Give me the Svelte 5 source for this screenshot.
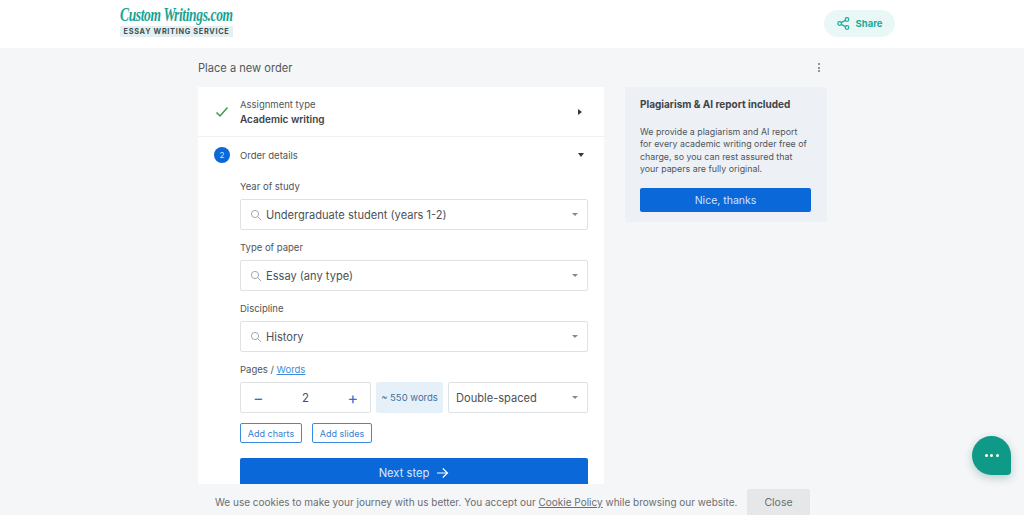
<script>
  const fields = [
    { label: 'Year of study', value: 'Undergraduate student (years 1-2)' },
    { label: 'Type of paper', value: 'Essay (any type)' },
    { label: 'Discipline', value: 'History' }
  ];
</script>

<div class="page">
  <header class="top">
    <a class="logo" href="#home">
      <span class="logo-name">Custom Writings.com</span>
      <span class="logo-tag">ESSAY WRITING SERVICE</span>
    </a>
    <button class="share">
      <svg width="13" height="13" viewBox="0 0 13 13" fill="none" stroke="#1fa79a" stroke-width="1.2">
        <circle cx="10" cy="2.5" r="1.8" />
        <circle cx="2.6" cy="6.5" r="1.8" />
        <circle cx="10" cy="10.5" r="1.8" />
        <path d="M4.2 5.6 8.4 3.4M4.2 7.4l4.2 2.2" />
      </svg>
      Share
    </button>
  </header>

  <main class="main">
    <div class="title-row">
      <h1>Place a new order</h1>
      <span class="more"><i></i><i></i><i></i></span>
    </div>

    <div class="columns">
      <section class="card">
        <div class="step done">
          <svg class="check" width="14" height="12" viewBox="0 0 14 12" fill="none" stroke="#3a9a4e" stroke-width="1.5">
            <path d="M1.5 6.5 5 10l7.5-8.5" />
          </svg>
          <div class="step-text">
            <div>Assignment type</div>
            <strong>Academic writing</strong>
          </div>
          <span class="caret-right"></span>
        </div>

        <div class="step-head">
          <span class="num">2</span>
          <span class="step-name">Order details</span>
          <span class="caret-down"></span>
        </div>

        <div class="form">
          {#each fields as field}
            <div class="label">{field.label}</div>
            <div class="select">
              <svg width="12" height="12" viewBox="0 0 12 12" fill="none" stroke="#a4a9ae" stroke-width="1">
                <circle cx="5" cy="5" r="3.6" />
                <path d="m7.7 7.7 3.4 3.4" />
              </svg>
              <span class="value">{field.value}</span>
              <span class="arrow"></span>
            </div>
          {/each}

          <div class="label">Pages / <a href="#words">Words</a></div>
          <div class="pages">
            <div class="stepper">
              <span class="sign">−</span>
              <span class="count">2</span>
              <span class="sign">+</span>
            </div>
            <div class="words">~ 550 words</div>
            <div class="select spacing">
              <span class="value">Double-spaced</span>
              <span class="arrow"></span>
            </div>
          </div>

          <div class="extras">
            <button class="extra">Add charts</button>
            <button class="extra">Add slides</button>
          </div>

          <button class="next">
            Next step
            <svg width="13" height="12" viewBox="0 0 13 12" fill="none" stroke="#fff" stroke-width="1.2">
              <path d="M1 6h10.500M6.800 1.500 11.500 6l-4.700 4.500" />
            </svg>
          </button>
        </div>
      </section>

      <aside class="note">
        <h2>Plagiarism &amp; AI report included</h2>
        <p>We provide a plagiarism and AI report for every academic writing order free of charge, so you can rest assured that your papers are fully original.</p>
        <button>Nice, thanks</button>
      </aside>
    </div>
  </main>

  <div class="cookies">
    <span>We use cookies to make your journey with us better. You accept our <a href="#policy">Cookie Policy</a> while browsing our website.</span>
    <button>Close</button>
  </div>

  <div class="chat"><i></i><i></i><i></i></div>
</div>

<style>
  :global(body) {
    margin: 0;
    background: #f4f6f8;
  }
  .page {
    height: 515px;
    overflow: hidden;
    position: relative;
    font-family: Inter, "Liberation Sans", sans-serif;
    color: #50555a;
  }
  button {
    font-family: inherit;
    border: none;
    padding: 0;
  }
  .top {
    height: 48px;
    background: #fff;
    display: flex;
    align-items: flex-start;
    justify-content: space-between;
    padding: 0 129px 0 120px;
  }
  .logo {
    display: flex;
    flex-direction: column;
    align-items: flex-start;
    text-decoration: none;
    width: 113px;
    padding-top: 4px;
  }
  .logo-name {
    font-family: "Liberation Serif", serif;
    font-style: italic;
    font-weight: 700;
    font-size: 19px;
    line-height: 21px;
    letter-spacing: -0.5px;
    color: #17a294;
    white-space: nowrap;
    transform: scaleX(0.71);
    transform-origin: left center;
  }
  .logo-tag {
    margin-top: 1px;
    width: 113px;
    height: 11px;
    background: #e3eff0;
    color: #3d4f55;
    font-size: 7.300px;
    font-weight: 700;
    line-height: 11px;
    letter-spacing: 0.7px;
    text-align: center;
    white-space: nowrap;
  }
  .share {
    margin-top: 10px;
    width: 71px;
    height: 27px;
    border-radius: 14px;
    background: #e9f8f6;
    color: #1fa79a;
    font-size: 9.500px;
    font-weight: 700;
    display: flex;
    align-items: center;
    justify-content: center;
    gap: 6px;
  }
  .main {
    width: 629px;
    margin-left: 198px;
  }
  .title-row {
    height: 39px;
    display: flex;
    align-items: center;
    justify-content: space-between;
  }
  h1 {
    margin: 0;
    font-size: 11.100px;
    font-weight: 400;
    color: #53585c;
  }
  .more {
    display: flex;
    flex-direction: column;
    gap: 1.500px;
    padding-right: 7px;
  }
  .more i {
    width: 2px;
    height: 2px;
    border-radius: 50%;
    background: #70757a;
  }
  .columns {
    display: flex;
    align-items: flex-start;
    gap: 21px;
  }
  .card {
    width: 406px;
    background: #fff;
    flex: none;
    height: 420px;
  }
  .step {
    height: 49px;
    display: flex;
    align-items: center;
    border-bottom: 1px solid #f0f1f3;
    padding: 0 22px 0 17px;
  }
  .check {
    margin-right: 11px;
    flex: none;
  }
  .step-text {
    flex: 1;
    font-size: 9.500px;
    line-height: 14px;
  }
  .step-text strong {
    display: block;
    color: #3d4246;
    font-weight: 600;
    font-size: 10px;
  }
  .caret-right {
    width: 0;
    height: 0;
    border-left: 4px solid #33383c;
    border-top: 3.500px solid transparent;
    border-bottom: 3.500px solid transparent;
  }
  .step-head {
    height: 36px;
    display: flex;
    align-items: center;
    padding: 0 20px 0 16px;
  }
  .num {
    width: 16px;
    height: 16px;
    border-radius: 50%;
    background: #0a68d8;
    color: #cfe2fa;
    font-size: 8px;
    line-height: 16px;
    text-align: center;
    margin-right: 10px;
  }
  .step-name {
    flex: 1;
    font-size: 9.500px;
  }
  .caret-down {
    width: 0;
    height: 0;
    border-top: 4px solid #33383c;
    border-left: 3.500px solid transparent;
    border-right: 3.500px solid transparent;
  }
  .form {
    padding: 0 16px 0 42px;
  }
  .label {
    font-size: 9.500px;
    line-height: 12px;
    margin: 8px 0 6px;
  }
  .label a {
    color: #3a8be0;
  }
  .select {
    height: 31px;
    box-sizing: border-box;
    background: #fff;
    border: 1px solid #dfe2e5;
    border-radius: 2px;
    display: flex;
    align-items: center;
    padding: 0 9px 0 9px;
    margin-bottom: 12px;
  }
  .value {
    flex: 1;
    font-size: 11.100px;
    color: #4c5155;
    margin-left: 4px;
    white-space: nowrap;
  }
  .arrow {
    width: 0;
    height: 0;
    border-top: 3.500px solid #85898d;
    border-left: 3.500px solid transparent;
    border-right: 3.500px solid transparent;
  }
  .pages {
    display: flex;
    gap: 5px;
  }
  .stepper {
    width: 131px;
    height: 31px;
    box-sizing: border-box;
    border: 1px solid #dfe2e5;
    border-radius: 2px;
    display: flex;
    align-items: center;
    justify-content: space-between;
    padding: 0 12px;
  }
  .sign {
    color: #1a78d8;
    font-size: 16px;
    line-height: 16px;
  }
  .count {
    font-size: 11.500px;
    color: #4c5155;
  }
  .words {
    width: 67px;
    height: 31px;
    background: #e6f0f9;
    border-radius: 2px;
    color: #41709e;
    font-size: 9.500px;
    line-height: 31px;
    text-align: center;
    white-space: nowrap;
  }
  .spacing {
    flex: 1;
    padding-left: 3px;
    margin-bottom: 0;
  }
  .extras {
    display: flex;
    gap: 10px;
    margin-top: 10px;
  }
  .extra {
    height: 20px;
    width: 62px;
    background: #fff;
    border: 1px solid #3a8be0;
    border-radius: 2px;
    color: #3a80cf;
    font-size: 9px;
    white-space: nowrap;
  }
  .extra + .extra {
    width: 60px;
  }
  .next {
    margin-top: 15px;
    width: 100%;
    height: 31px;
    padding-bottom: 2px;
    background: #0a68d8;
    border-radius: 2px;
    color: #dbe9fb;
    font-size: 11.200px;
    display: flex;
    align-items: center;
    justify-content: center;
    gap: 7px;
  }
  .note {
    width: 202px;
    height: 135px;
    box-sizing: border-box;
    background: #edf1f6;
    border-radius: 3px;
    padding: 11px 16px 0 15px;
  }
  h2 {
    margin: 0;
    font-size: 10px;
    line-height: 12px;
    font-weight: 700;
    color: #3f4448;
  }
  .note p {
    margin: 15.500px 0 0;
    font-size: 8.850px;
    line-height: 12.500px;
    color: #50555a;
  }
  .note button {
    display: block;
    margin-top: 12.500px;
    width: 171px;
    height: 24px;
    background: #0a68d8;
    border-radius: 2px;
    color: #cfe2fa;
    font-size: 10.500px;
  }
  .cookies {
    position: absolute;
    left: 0;
    right: 0;
    bottom: 0;
    height: 31px;
    box-sizing: border-box;
    background: #f5f6f7;
    display: flex;
    align-items: center;
    padding: 5px 0 0 215px;
    font-size: 10px;
    color: #6a6e72;
  }
  .cookies span {
    white-space: nowrap;
  }
  .cookies a {
    color: #6a6e72;
  }
  .cookies button {
    position: absolute;
    left: 747px;
    top: 5px;
    width: 63px;
    height: 26px;
    background: #e6e7e8;
    border-radius: 2px 2px 0 0;
    color: #6a6e72;
    font-size: 10.500px;
  }
  .chat {
    position: absolute;
    left: 972px;
    top: 436px;
    width: 39px;
    height: 39px;
    background: #0e9a86;
    border-radius: 50% 50% 4px 50%;
    box-shadow: 0 3px 8px rgba(0, 80, 70, 0.25);
    display: flex;
    align-items: center;
    justify-content: center;
    gap: 2.500px;
  }
  .chat i {
    width: 3px;
    height: 3px;
    border-radius: 50%;
    background: #fff;
  }
</style>
